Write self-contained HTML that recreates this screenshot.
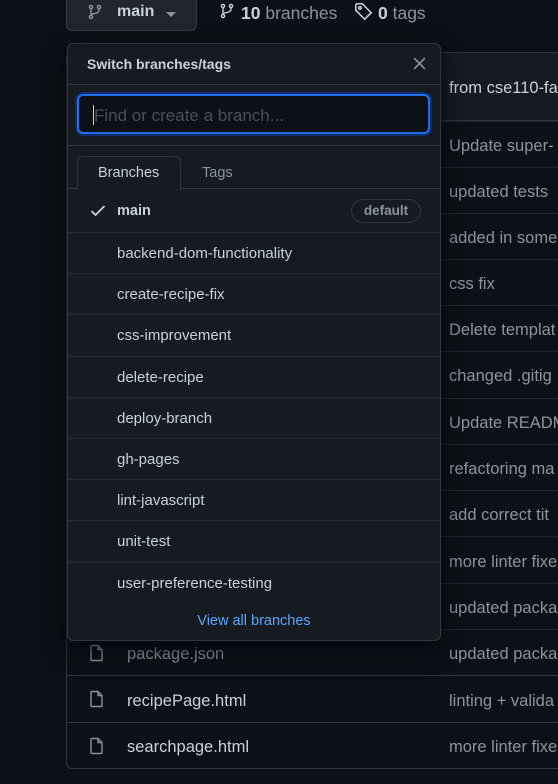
<!DOCTYPE html>
<html><head><meta charset="utf-8"><style>
*{box-sizing:border-box;margin:0;padding:0}
body{width:558px;height:784px;overflow:hidden;background:#0d1117;font-family:"Liberation Sans",sans-serif;color:#c9d1d9;position:relative}
.abs{position:absolute}
.btn{left:66px;top:-8px;width:131px;height:39px;background:#21262d;border:1px solid #363b42;border-radius:6px}
.box{left:66px;top:52px;width:520px;height:717px;border:1px solid #30363d;border-radius:6px;overflow:hidden}
.hdr{left:0;top:0;right:0;height:68px;background:#161b22;border-bottom:1px solid #30363d}
.row{position:absolute;left:0;right:0;height:46px;border-top:1px solid #21262d}
.msg{position:absolute;left:382px;font-size:16.5px;color:#8b949e;white-space:nowrap}
.fn{position:absolute;left:60px;font-size:16.5px;color:#c9d1d9}
.dd{left:67px;top:43px;width:374px;height:598px;background:#161b22;border:1px solid #30363d;border-radius:6px;box-shadow:0 8px 24px rgba(1,4,9,.8)}
.br{position:absolute;left:0;right:0;height:41px;border-top:1px solid #262c34;font-size:15px;color:#c9d1d9;padding-left:49px;line-height:41px}
</style></head><body>
<div class="abs btn"></div>
<svg class="abs" style="left:87px;top:3px" width="16" height="18" viewBox="0 0 16 16" fill="none" stroke="#8b949e" stroke-width="1.4"><circle cx="4" cy="3" r="1.6"/><circle cx="4" cy="13" r="1.6"/><circle cx="12" cy="3" r="1.6"/><path d="M4 4.6v6.8M12 4.6v1.4c0 2-2 3-4 3.5S4 10 4 11"/></svg>
<div class="abs" style="left:117px;top:3px;font-size:16px;font-weight:bold;color:#c9d1d9">main</div>
<div class="abs" style="left:166px;top:12px;width:0;height:0;border-left:5px solid transparent;border-right:5px solid transparent;border-top:5px solid #8b949e"></div>
<svg class="abs" style="left:219px;top:2px" width="16" height="18" viewBox="0 0 16 16" fill="none" stroke="#c9d1d9" stroke-width="1.4"><circle cx="4" cy="3" r="1.6"/><circle cx="4" cy="13" r="1.6"/><circle cx="12" cy="3" r="1.6"/><path d="M4 4.6v6.8M12 4.6v1.4c0 2-2 3-4 3.5S4 10 4 11"/></svg>
<div class="abs" style="left:241px;top:3px;font-size:17.5px;color:#8b949e"><b style="color:#c9d1d9">10</b> branches</div>
<svg class="abs" style="left:354px;top:2px" width="19" height="19" viewBox="0 0 16 16" fill="none" stroke="#c9d1d9" stroke-width="1.3"><path d="M1.5 2.5v4.5l7.5 7.5 5.5-5.5-7.5-7.5H2.5z"/><circle cx="5" cy="5" r="1.1"/></svg>
<div class="abs" style="left:378px;top:3px;font-size:17.5px;color:#8b949e"><b style="color:#c9d1d9">0</b> tags</div>

<div class="abs box">
<div class="abs hdr"><div class="msg" style="top:26px;color:#c9d1d9">from cse110-fa22</div></div>
<div class="row" style="top:68px"><div class="msg" style="top:15px">Update super-</div></div>
<div class="row" style="top:114px"><div class="msg" style="top:15px">updated tests</div></div>
<div class="row" style="top:160px"><div class="msg" style="top:15px">added in some</div></div>
<div class="row" style="top:206px"><div class="msg" style="top:15px">css fix</div></div>
<div class="row" style="top:252px"><div class="msg" style="top:15px">Delete templat</div></div>
<div class="row" style="top:298px"><div class="msg" style="top:15px">changed .gitig</div></div>
<div class="row" style="top:345px"><div class="msg" style="top:15px">Update READM</div></div>
<div class="row" style="top:391px"><div class="msg" style="top:15px">refactoring ma</div></div>
<div class="row" style="top:437px"><div class="msg" style="top:15px">add correct tit</div></div>
<div class="row" style="top:483px"><div class="msg" style="top:16px">more linter fixe</div></div>
<div class="row" style="top:530px"><div class="msg" style="top:15px">updated packa</div></div>
<div class="row" style="top:576px"><div class="msg" style="top:15px">updated packa</div><div class="fn" style="top:15px;color:#8b949e">package.json</div>
<svg class="abs" style="left:22px;top:14px" width="16" height="18" viewBox="0 0 16 18" fill="none" stroke="#8b949e" stroke-width="1.4"><path d="M2 2.5a1 1 0 0 1 1-1h6l4 4v10a1 1 0 0 1-1 1H3a1 1 0 0 1-1-1zM9 1.5v4h4"/></svg></div>
<div class="row" style="top:622px;border-color:#30363d"><div class="msg" style="top:16px">linting + valida</div><div class="fn" style="top:16px">recipePage.html</div>
<svg class="abs" style="left:22px;top:14px" width="16" height="18" viewBox="0 0 16 18" fill="none" stroke="#8b949e" stroke-width="1.4"><path d="M2 2.5a1 1 0 0 1 1-1h6l4 4v10a1 1 0 0 1-1 1H3a1 1 0 0 1-1-1zM9 1.5v4h4"/></svg></div>
<div class="row" style="top:669px;border-color:#30363d"><div class="msg" style="top:15px">more linter fixe</div><div class="fn" style="top:15px">searchpage.html</div>
<svg class="abs" style="left:22px;top:14px" width="16" height="18" viewBox="0 0 16 18" fill="none" stroke="#8b949e" stroke-width="1.4"><path d="M2 2.5a1 1 0 0 1 1-1h6l4 4v10a1 1 0 0 1-1 1H3a1 1 0 0 1-1-1zM9 1.5v4h4"/></svg></div>
</div>

<div class="abs dd">
<div class="abs" style="left:19px;top:12px;font-size:14px;font-weight:bold;color:#c9d1d9">Switch branches/tags</div>
<svg class="abs" style="left:345px;top:13px" width="13" height="13" viewBox="0 0 12 12" stroke="#8b949e" stroke-width="1.5"><path d="M1 1l10 10M11 1L1 11"/></svg>
<div class="abs" style="left:0;right:0;top:40px;border-top:1px solid #30363d"></div>
<div class="abs" style="left:9px;top:50px;width:353px;height:40px;border:2px solid #1f6feb;border-radius:6px;background:#0d1117;box-shadow:0 0 0 2px #0c2d6b"></div>
<div class="abs" style="left:25px;top:61px;width:1px;height:20px;background:#c9d1d9"></div>
<div class="abs" style="left:26px;top:62px;font-size:17px;color:#484f58">Find or create a branch...</div>
<div class="abs" style="left:0;right:0;top:101px;border-top:1px solid #30363d"></div>
<div class="abs" style="left:0;right:0;top:144px;border-top:1px solid #30363d"></div>
<div class="abs" style="left:9px;top:112px;width:104px;height:34px;background:#161b22;border:1px solid #30363d;border-bottom:none;border-radius:6px 6px 0 0"></div>
<div class="abs" style="left:30px;top:121px;font-size:14.5px;color:#c9d1d9">Branches</div>
<div class="abs" style="left:134px;top:121px;font-size:14.5px;color:#8b949e">Tags</div>
<svg class="abs" style="left:22px;top:160px" width="16" height="14" viewBox="0 0 16 14" fill="none" stroke="#c9d1d9" stroke-width="1.8"><path d="M1.5 7l4 4 9-9"/></svg>
<div class="abs" style="left:49px;top:159px;font-size:14.5px;font-weight:bold;color:#c9d1d9">main</div>
<div class="abs" style="left:283px;top:155px;width:70px;height:24px;border:1px solid #30363d;border-radius:12px;font-size:13.5px;font-weight:bold;color:#8b949e;text-align:center;line-height:22px">default</div>
<div class="br" style="top:188px">backend-dom-functionality</div>
<div class="br" style="top:229px">create-recipe-fix</div>
<div class="br" style="top:270px">css-improvement</div>
<div class="br" style="top:312px">delete-recipe</div>
<div class="br" style="top:353px">deploy-branch</div>
<div class="br" style="top:394px">gh-pages</div>
<div class="br" style="top:435px">lint-javascript</div>
<div class="br" style="top:476px">unit-test</div>
<div class="br" style="top:518px">user-preference-testing</div>
<div class="abs" style="left:0;right:0;top:569px;text-align:center;font-size:14.5px;color:#58a6ff">View all branches</div>
</div>
</body></html>
